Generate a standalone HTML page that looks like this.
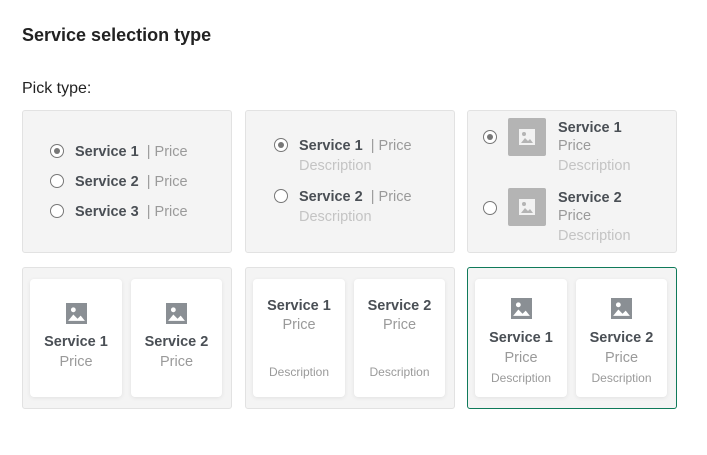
<!DOCTYPE html>
<html><head><meta charset="utf-8"><style>
*{margin:0;padding:0;box-sizing:border-box}
body{width:707px;height:455px;background:#fff;font-family:"Liberation Sans",sans-serif;position:relative;overflow:hidden;color:#4a4f55}
.a{position:absolute;white-space:nowrap}
.box{position:absolute;background:#f4f4f4;border:1px solid #e2e2e2;border-radius:3px}
.sel{border:1px solid #0f7a5a}
.card{position:absolute;background:#fff;border-radius:4px;box-shadow:0 1px 4px rgba(0,0,0,.08);text-align:center}
.r{position:absolute;width:14px;height:14px;border:1.3px solid #777;border-radius:50%;background:#fff}
.r.on::after{content:"";position:absolute;left:3px;top:3px;width:6px;height:6px;border-radius:50%;background:#777}
b{font-weight:bold;color:#4a4f55;font-size:14.5px}
.p{color:#9a9a9a;font-size:14.5px}
.d{color:#c4c4c4;font-size:14.5px}
.thumb{position:absolute;width:38px;height:38px;background:#b4b4b4;border-radius:2px}
.ic{display:block;margin:0 auto}
</style></head><body>
<div class="a" style="left:22px;top:25px;font-size:18px;font-weight:bold;color:#222">Service selection type</div>
<div class="a" style="left:22px;top:80px;font-size:16px;color:#222">Pick type:</div>

<div class="box" style="left:22px;top:110px;width:210px;height:143px"></div>
<div class="r on" style="left:50px;top:144px"></div>
<div class="a" style="left:75px;top:143px"><b>Service 1</b><span class="p"> &nbsp;| Price</span></div>
<div class="r" style="left:50px;top:174px"></div>
<div class="a" style="left:75px;top:173px"><b>Service 2</b><span class="p"> &nbsp;| Price</span></div>
<div class="r" style="left:50px;top:204px"></div>
<div class="a" style="left:75px;top:203px"><b>Service 3</b><span class="p"> &nbsp;| Price</span></div>

<div class="box" style="left:245px;top:110px;width:210px;height:143px"></div>
<div class="r on" style="left:274px;top:138px"></div>
<div class="a" style="left:299px;top:137px"><b>Service 1</b><span class="p"> &nbsp;| Price</span></div>
<div class="a d" style="left:299px;top:158px">Description</div>
<div class="r" style="left:274px;top:189px"></div>
<div class="a" style="left:299px;top:188px"><b>Service 2</b><span class="p"> &nbsp;| Price</span></div>
<div class="a d" style="left:299px;top:209px">Description</div>

<div class="box" style="left:467px;top:110px;width:210px;height:143px"></div>
<div class="r on" style="left:483px;top:130px"></div>
<div class="thumb" style="left:508px;top:118px"><svg style="position:absolute;left:11px;top:11px" width="16" height="16" viewBox="0 0 16 16"><rect width="16" height="16" fill="#f2f2f2"/><circle cx="5" cy="5" r="2" fill="#b4b4b4"/><path d="M2 14 L6 9 L9 12 L11 10 L14 14Z" fill="#b4b4b4"/></svg></div>
<div class="a" style="left:558px;top:119px"><b>Service 1</b></div>
<div class="a p" style="left:558px;top:138px">Price</div>
<div class="a d" style="left:558px;top:158px">Description</div>
<div class="r" style="left:483px;top:201px"></div>
<div class="thumb" style="left:508px;top:188px"><svg style="position:absolute;left:11px;top:11px" width="16" height="16" viewBox="0 0 16 16"><rect width="16" height="16" fill="#f2f2f2"/><circle cx="5" cy="5" r="2" fill="#b4b4b4"/><path d="M2 14 L6 9 L9 12 L11 10 L14 14Z" fill="#b4b4b4"/></svg></div>
<div class="a" style="left:558px;top:189px"><b>Service 2</b></div>
<div class="a p" style="left:558px;top:208px">Price</div>
<div class="a d" style="left:558px;top:228px">Description</div>

<!-- row 2 -->
<div class="box" style="left:22px;top:267px;width:210px;height:142px"></div>
<div class="card" style="left:30px;top:279px;width:92px;height:118px">
<svg class="ic" style="margin-top:24px" width="21" height="21" viewBox="0 0 20 20"><rect width="20" height="20" fill="#8a8f94"/><circle cx="7" cy="6.5" r="2.3" fill="#fff"/><path d="M2 17 L7 11 L11 15 L14 12 L18 17Z" fill="#fff"/></svg>
<div style="margin-top:9px"><b>Service 1</b></div><div class="p" style="margin-top:3px">Price</div></div>
<div class="card" style="left:131px;top:279px;width:91px;height:118px">
<svg class="ic" style="margin-top:24px" width="21" height="21" viewBox="0 0 20 20"><rect width="20" height="20" fill="#8a8f94"/><circle cx="7" cy="6.5" r="2.3" fill="#fff"/><path d="M2 17 L7 11 L11 15 L14 12 L18 17Z" fill="#fff"/></svg>
<div style="margin-top:9px"><b>Service 2</b></div><div class="p" style="margin-top:3px">Price</div></div>

<div class="box" style="left:245px;top:267px;width:210px;height:142px"></div>
<div class="card" style="left:253px;top:279px;width:92px;height:118px">
<div style="margin-top:18px"><b>Service 1</b></div><div class="p" style="margin-top:2px">Price</div><div style="margin-top:32px;font-size:12px;color:#9a9a9a">Description</div></div>
<div class="card" style="left:354px;top:279px;width:91px;height:118px">
<div style="margin-top:18px"><b>Service 2</b></div><div class="p" style="margin-top:2px">Price</div><div style="margin-top:32px;font-size:12px;color:#9a9a9a">Description</div></div>

<div class="box sel" style="left:467px;top:267px;width:210px;height:142px"></div>
<div class="card" style="left:475px;top:279px;width:92px;height:118px">
<svg class="ic" style="margin-top:19px" width="21" height="21" viewBox="0 0 20 20"><rect width="20" height="20" fill="#8a8f94"/><circle cx="7" cy="6.5" r="2.3" fill="#fff"/><path d="M2 17 L7 11 L11 15 L14 12 L18 17Z" fill="#fff"/></svg>
<div style="margin-top:10px"><b>Service 1</b></div><div class="p" style="margin-top:3px">Price</div><div style="margin-top:5px;font-size:12px;color:#9a9a9a">Description</div></div>
<div class="card" style="left:576px;top:279px;width:91px;height:118px">
<svg class="ic" style="margin-top:19px" width="21" height="21" viewBox="0 0 20 20"><rect width="20" height="20" fill="#8a8f94"/><circle cx="7" cy="6.5" r="2.3" fill="#fff"/><path d="M2 17 L7 11 L11 15 L14 12 L18 17Z" fill="#fff"/></svg>
<div style="margin-top:10px"><b>Service 2</b></div><div class="p" style="margin-top:3px">Price</div><div style="margin-top:5px;font-size:12px;color:#9a9a9a">Description</div></div>
</body></html>
